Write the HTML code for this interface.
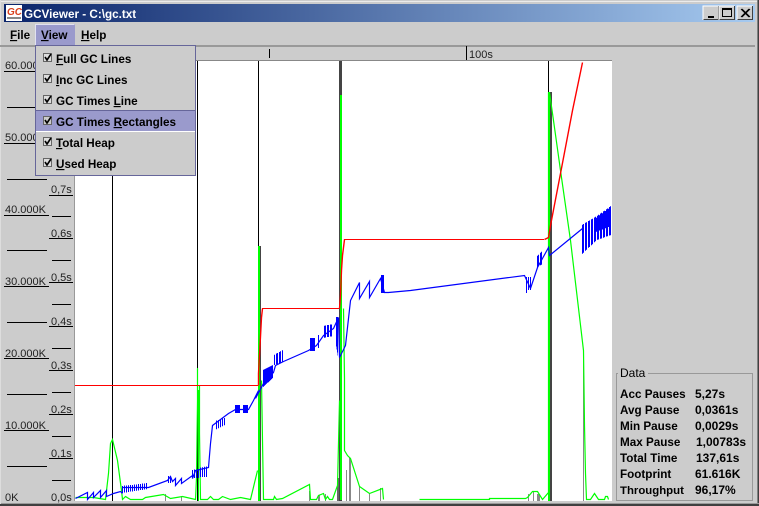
<!DOCTYPE html>
<html><head><meta charset="utf-8"><title>GCViewer</title>
<style>
html,body{margin:0;padding:0;background:#ccc;width:759px;height:506px;overflow:hidden}
svg{display:block}
text{font-family:"Liberation Sans",sans-serif;font-size:12px;fill:#000}
.b{font-weight:bold;font-size:11.7px}
.v{font-weight:bold;font-size:12px}
.s{font-size:11px;fill:#222}
.u{text-decoration:underline}
.k line{stroke:#000;stroke-width:1;shape-rendering:crispEdges}
polyline{fill:none}
.bl{stroke:#00f;stroke-width:1.2}
.gr{stroke:#0f0;stroke-width:1.2}
</style></head><body>
<svg width="759" height="506" viewBox="0 0 759 506" xmlns="http://www.w3.org/2000/svg">
<defs>
<linearGradient id="t" x1="0" x2="1" y1="0" y2="0"><stop offset="0" stop-color="#0a246a"/><stop offset="1" stop-color="#a6caf0"/></linearGradient>
<pattern id="c1" width="2" height="4" patternUnits="userSpaceOnUse"><rect width="1" height="4" fill="#00f"/></pattern>
<pattern id="c2" width="3" height="4" patternUnits="userSpaceOnUse"><rect width="2" height="4" fill="#00f"/></pattern>
</defs>
<rect width="759" height="506" fill="#ccc"/>
<rect x="1" y="1" width="757" height="1" fill="#fff" opacity=".6"/>
<rect x="757" y="0" width="1" height="505" fill="#808080"/>
<rect x="758" y="0" width="1" height="506" fill="#404040"/>
<rect x="0" y="503" width="759" height="1" fill="#9a9a9a"/>
<rect x="0" y="504" width="759" height="2" fill="#404040"/>
<rect x="0" y="0" width="1" height="504" fill="#ddd"/>
<!-- title bar -->
<rect x="4" y="4" width="751" height="18" fill="url(#t)"/>
<rect x="6" y="5" width="16" height="16" fill="#fff"/>
<text x="7" y="15" style="font-size:10px;font-weight:bold;fill:#d8401c;font-style:italic">GC</text>
<rect x="7" y="17" width="14" height="2" fill="#555" opacity=".7"/>
<text x="24" y="18" class="b" style="fill:#fff;font-size:11.7px">GCViewer - C:\gc.txt</text>
<g shape-rendering="crispEdges">
<rect x="703" y="6" width="16" height="14" fill="#ccc"/><path d="M703 20V6H719" stroke="#fff" fill="none"/><path d="M703.5 19.5H718.5V6" stroke="#404040" fill="none"/>
<rect x="708" y="16" width="6" height="2" fill="#000"/>
<rect x="719" y="6" width="16" height="14" fill="#ccc"/><path d="M719 20V6H735" stroke="#fff" fill="none"/><path d="M719.5 19.5H734.5V6" stroke="#404040" fill="none"/>
<rect x="722.5" y="8.5" width="9" height="8" fill="none" stroke="#000"/><rect x="722" y="8" width="10" height="2" fill="#000"/>
<rect x="737" y="6" width="16" height="14" fill="#ccc"/><path d="M737 20V6H753" stroke="#fff" fill="none"/><path d="M737.5 19.5H752.5V6" stroke="#404040" fill="none"/>
</g>
<path d="M741 9L749 17M742 9L750 17M749 9L741 17M750 9L742 17" stroke="#000" fill="none"/>
<!-- menu bar -->
<rect x="0" y="45" width="755" height="2" fill="#999"/>
<rect x="35" y="24" width="40" height="21" fill="#9a9acc"/>
<path d="M35.5 45V24.5H74.5" stroke="#fff" fill="none" opacity=".7"/>
<text x="10" y="39" class="b"><tspan class="u">F</tspan>ile</text>
<text x="41" y="39" class="b"><tspan class="u">V</tspan>iew</text>
<text x="81" y="39" class="b"><tspan class="u">H</tspan>elp</text>
<!-- top ruler -->
<rect x="75" y="60" width="537" height="1" fill="#888"/>
<rect x="269" y="49" width="1" height="9" fill="#000"/>
<rect x="466" y="46" width="1" height="14" fill="#000"/>
<text x="469" y="58" class="s">100s</text>
<!-- chart -->
<rect x="75" y="61" width="537" height="440" fill="#fff"/>
<rect x="74" y="60" width="1" height="441" fill="#999"/>
<!-- left rulers -->
<g class="k">
<line x1="4" x2="49" y1="71.5" y2="71.5"/><line x1="4" x2="49" y1="143.5" y2="143.5"/><line x1="4" x2="49" y1="215.5" y2="215.5"/><line x1="4" x2="49" y1="286.5" y2="286.5"/><line x1="4" x2="49" y1="358.5" y2="358.5"/><line x1="4" x2="49" y1="430.5" y2="430.5"/>
<line x1="7" x2="47" y1="107.5" y2="107.5"/><line x1="7" x2="47" y1="179.5" y2="179.5"/><line x1="7" x2="47" y1="250.5" y2="250.5"/><line x1="7" x2="47" y1="322.5" y2="322.5"/><line x1="7" x2="47" y1="394.5" y2="394.5"/><line x1="7" x2="47" y1="466.5" y2="466.5"/>
<line x1="49" x2="73" y1="195.5" y2="195.5"/><line x1="49" x2="73" y1="282.5" y2="282.5"/><line x1="49" x2="73" y1="238.5" y2="238.5"/><line x1="49" x2="73" y1="326.5" y2="326.5"/><line x1="49" x2="73" y1="370.5" y2="370.5"/><line x1="49" x2="73" y1="414.5" y2="414.5"/><line x1="49" x2="73" y1="458.5" y2="458.5"/>
<line x1="52" x2="71" y1="216.5" y2="216.5"/><line x1="52" x2="71" y1="260.5" y2="260.5"/><line x1="52" x2="71" y1="304.5" y2="304.5"/><line x1="52" x2="71" y1="348.5" y2="348.5"/><line x1="52" x2="71" y1="392.5" y2="392.5"/><line x1="52" x2="71" y1="436.5" y2="436.5"/><line x1="52" x2="71" y1="480.5" y2="480.5"/>
</g>
<text x="5" y="69" class="s">60.000K</text><text x="5" y="141" class="s">50.000K</text><text x="5" y="213" class="s">40.000K</text><text x="5" y="285" class="s">30.000K</text><text x="5" y="357" class="s">20.000K</text><text x="5" y="429" class="s">10.000K</text><text x="5" y="501" class="s">0K</text>
<text x="51" y="193" class="s">0,7s</text><text x="51" y="237" class="s">0,6s</text><text x="51" y="281" class="s">0,5s</text><text x="51" y="325" class="s">0,4s</text><text x="51" y="369" class="s">0,3s</text><text x="51" y="413" class="s">0,2s</text><text x="51" y="457" class="s">0,1s</text><text x="51" y="501" class="s">0,0s</text>
<!-- full GC lines -->
<g shape-rendering="crispEdges">
<rect x="112" y="61" width="1" height="440" fill="#000"/>
<rect x="197" y="61" width="1" height="307" fill="#000"/>
<rect x="258" y="61" width="1" height="185" fill="#000"/>
<rect x="548" y="61" width="1" height="31" fill="#000"/>
<!-- gc rects -->
<rect x="339" y="61" width="3" height="440" fill="#444"/>
<rect x="549" y="92" width="3" height="409" fill="#444"/>
<rect x="259" y="246" width="2" height="255" fill="#444"/>
<rect x="197" y="400" width="2" height="101" fill="#000"/>
<rect x="583" y="360" width="1" height="141" fill="#888"/>
<rect x="346" y="470" width="1" height="31" fill="#888"/><rect x="349" y="458" width="2" height="43" fill="#888"/><rect x="359" y="486" width="1" height="15" fill="#888"/><rect x="369" y="493" width="1" height="8" fill="#888"/><rect x="380" y="488" width="1" height="13" fill="#888"/>
<rect x="309" y="491" width="1" height="10" fill="#888"/><rect x="318" y="495" width="2" height="6" fill="#888"/><rect x="325" y="494" width="1" height="7" fill="#888"/><rect x="337" y="478" width="2" height="23" fill="#666"/>
<rect x="528" y="494" width="1" height="7" fill="#888"/><rect x="533" y="492" width="1" height="9" fill="#888"/><rect x="537" y="494" width="3" height="7" fill="#888"/>
<rect x="165" y="494" width="1" height="7" fill="#888"/><rect x="181" y="496" width="1" height="5" fill="#888"/>
</g>
<!-- green line -->
<g transform="translate(.5,.5)">
<polyline class="gr" points="75,497 93,497 105,499 108,473 110,443 112,439 117,460 121,490 122,499 125,496 130,499 142,499 145,497 163,494 170,498 182,496 195,499 196,477 197,400 197,368"/>
<polyline class="gr" points="199,385 199,433 200,499 207,499 210,496 213,499 218,499 222,496 230,499 240,497 250,499 257,470"/>
<polyline class="gr" points="261,380 262,440 263,499 273,499 274,496 276,499 282,498 309,484 310,499 316,499 318,495 323,493 325,499 327,496 329,499 332,499 337,485 339,400"/>
<polyline class="gr" points="343,308 344,378 344,450 347,455 350,458 359,486 369,493 382,488 383,499"/>
<polyline class="gr" points="419,499 489,499 489,498 525,498 527,497 532,491 537,491 542,499 548,492 548,92"/>
<polyline class="gr" points="549,92 553,120 560,170 570,240 583,350 584,425 585,473 586,499 590,499 592,496 594,493 598,499 604,499 605,496 607,496 608,499"/>
</g>
<g shape-rendering="crispEdges" fill="#0f0">
<rect x="258" y="246" width="2" height="255"/>
<rect x="340" y="95" width="2" height="405"/>
<rect x="548" y="92" width="2" height="409"/>
<rect x="198" y="390" width="1" height="111"/><rect x="197" y="368" width="1" height="22"/>
</g>
<!-- red -->
<g shape-rendering="crispEdges" fill="#f00">
<rect x="75" y="385" width="183" height="1"/>
<rect x="262" y="308" width="77" height="1"/>
<rect x="344" y="239" width="200" height="1"/>
</g>
<g transform="translate(.5,.5)">
<polyline points="258,385 258,373 260,336 261,317 262,308" stroke="#f00" stroke-width="1.4"/>
<polyline points="339,308 340,295 341,270 342,255 344,239" stroke="#f00" stroke-width="1.4"/>
<polyline points="544,239 548,237 550,225 560,173 572,110 582,62" stroke="#f00" stroke-width="1.4"/>
<!-- blue -->
<polyline class="bl" points="75,498 87,492 87,499 93,492 93,497 100,490 100,497 106,490 106,496 113,493 120,491 122,493"/>
<polyline class="bl" points="122,487 148,487 167,480 170,476 172,481 175,478 175,485 181,478 181,483 192,475 192,478 195,470 208,467 210,443 212,425 228,413 235,409 248,409 253,400 258,390"/>
<polyline class="bl" points="255,398 263,383 273,372 275,365 283,361 308,350 316,345 323,335 333,328 338,317 339,357 345,345 350,300 359,282 359,298 369,281 369,297 380,278 384,292 388,292 410,290 524,275 530,288 537,267 548,247 549,255 582,228"/>
</g>
<g shape-rendering="crispEdges">
<polygon fill="url(#c1)" points="122,486 148,483 148,489 122,493"/>
<polygon fill="url(#c1)" points="168,476 172,476 172,483 168,483"/>
<polygon fill="url(#c1)" points="192,470 199,469 199,478 192,478"/>
<polygon fill="url(#c1)" points="199,468 208,466 208,477 199,477"/>
<polygon fill="url(#c1)" points="215,421 225,418 225,425 215,430"/>
<polygon fill="#00f" points="235,405 240,405 240,413 235,413"/>
<polygon fill="#00f" points="243,405 248,405 248,413 243,413"/>
<polygon fill="#00f" points="263,370 273,365 273,378 263,387"/>
<polygon fill="url(#c2)" points="274,355 283,350 283,362 274,365"/>
<polygon fill="#00f" points="310,338 315,338 315,351 310,351"/>
<polygon fill="url(#c1)" points="317,335 320,335 320,348 317,348"/>
<polygon fill="url(#c2)" points="323,326 333,324 333,336 323,338"/>
<polygon fill="#00f" points="336,317 338,317 338,357 336,345"/>
<polygon fill="#00f" points="381,275 384,275 384,293 381,293"/>
<polygon fill="url(#c1)" points="525,277 527,277 527,293 525,293"/>
<polygon fill="url(#c1)" points="528,277 531,277 531,290 528,290"/>
<polygon fill="url(#c2)" points="537,256 543,250 543,264 537,267"/>
<polygon fill="url(#c2)" points="582,225 597,216 611,206 611,235 597,240 582,254"/>
<polygon fill="#00f" points="596,218 611,207 611,226 596,232"/>
</g>
<!-- popup menu -->
<g shape-rendering="crispEdges">
<rect x="35.5" y="45.5" width="160" height="130" fill="#ccc" stroke="#66669a"/>
<rect x="36" y="111" width="159" height="20" fill="#9a9acc"/>
<rect x="36" y="110" width="159" height="1" fill="#66669a"/>
<rect x="36" y="131" width="159" height="1" fill="#fff"/>
<g fill="#ddd" stroke="#666"><rect x="43.5" y="53.5" width="8" height="8"/><rect x="43.5" y="74.5" width="8" height="8"/><rect x="43.5" y="95.5" width="8" height="8"/><rect x="43.5" y="116.5" width="8" height="8" fill="#ccc"/><rect x="43.5" y="137.5" width="8" height="8"/><rect x="43.5" y="158.5" width="8" height="8"/></g>
</g>
<g fill="none" stroke="#000" stroke-width="1.6"><path d="M45 57L47 60L51 54"/><path d="M45 78L47 81L51 75"/><path d="M45 99L47 102L51 96"/><path d="M45 120L47 123L51 117"/><path d="M45 141L47 144L51 138"/><path d="M45 162L47 165L51 159"/></g>
<text x="56" y="63" class="b"><tspan class="u">F</tspan>ull GC Lines</text>
<text x="56" y="84" class="b"><tspan class="u">I</tspan>nc GC Lines</text>
<text x="56" y="105" class="b">GC Times <tspan class="u">L</tspan>ine</text>
<text x="56" y="126" class="b">GC Times <tspan class="u">R</tspan>ectangles</text>
<text x="56" y="147" class="b"><tspan class="u">T</tspan>otal Heap</text>
<text x="56" y="168" class="b"><tspan class="u">U</tspan>sed Heap</text>
<!-- Data panel -->
<g shape-rendering="crispEdges"><rect x="616.5" y="373.5" width="136" height="127" fill="#ccc" stroke="#999"/></g>
<rect x="618" y="366" width="30" height="12" fill="#ccc"/>
<text x="620" y="377">Data</text>
<text x="620" y="398" class="b">Acc Pauses</text><text x="695" y="398" class="v">5,27s</text>
<text x="620" y="414" class="b">Avg Pause</text><text x="695" y="414" class="v">0,0361s</text>
<text x="620" y="430" class="b">Min Pause</text><text x="695" y="430" class="v">0,0029s</text>
<text x="620" y="446" class="b">Max Pause</text><text x="696" y="446" class="v">1,00783s</text>
<text x="620" y="462" class="b">Total Time</text><text x="696" y="462" class="v">137,61s</text>
<text x="620" y="478" class="b">Footprint</text><text x="695" y="478" class="v">61.616K</text>
<text x="620" y="494" class="b" style="font-size:11.4px">Throughput</text><text x="695" y="494" class="v">96,17%</text>
</svg>
</body></html>
